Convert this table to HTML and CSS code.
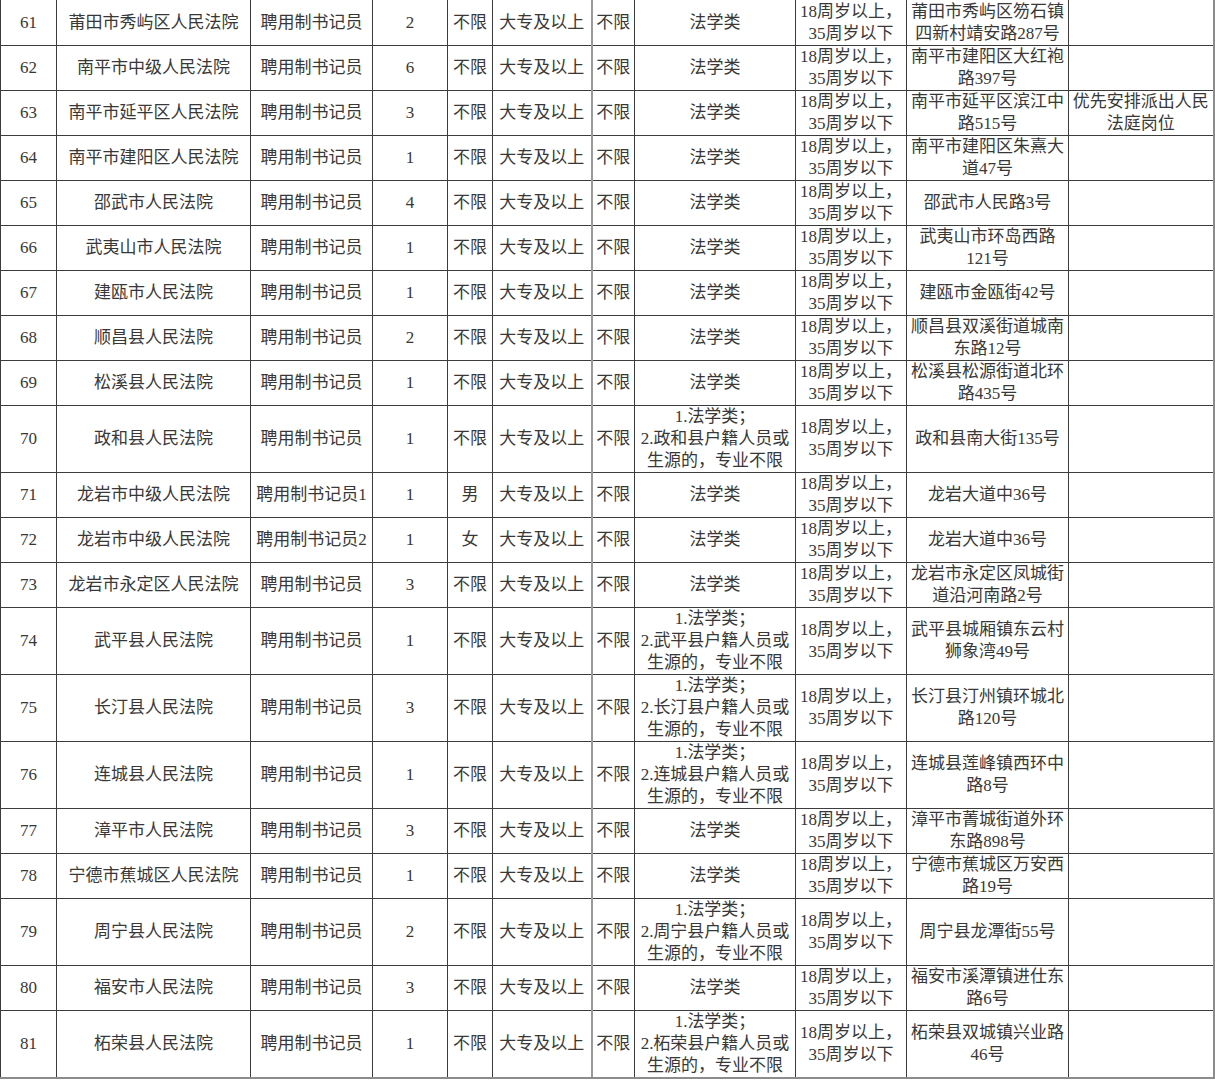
FILE: index.html
```html
<!DOCTYPE html>
<html lang="zh-CN">
<head>
<meta charset="utf-8">
<title>聘用制书记员岗位表</title>
<link rel="stylesheet" href="styles.css">
</head>
<body>
<table class="grid">
  <colgroup>
    <col class="c-no"><col class="c-unit"><col class="c-post"><col class="c-num"><col class="c-sex"><col class="c-edu"><col class="c-deg"><col class="c-major"><col class="c-age"><col class="c-addr"><col class="c-note">
  </colgroup>
  <tbody>
    <tr class="first"><td>61</td><td>莆田市秀屿区人民法院</td><td>聘用制书记员</td><td>2</td><td>不限</td><td>大专及以上</td><td class="split">不限</td><td>法学类</td><td>18周岁以上，<br>35周岁以下</td><td>莆田市秀屿区笏石镇<br>四新村靖安路287号</td><td></td></tr>
    <tr><td>62</td><td>南平市中级人民法院</td><td>聘用制书记员</td><td>6</td><td>不限</td><td>大专及以上</td><td class="split">不限</td><td>法学类</td><td>18周岁以上，<br>35周岁以下</td><td>南平市建阳区大红袍<br>路397号</td><td></td></tr>
    <tr><td>63</td><td>南平市延平区人民法院</td><td>聘用制书记员</td><td>3</td><td>不限</td><td>大专及以上</td><td class="split">不限</td><td>法学类</td><td>18周岁以上，<br>35周岁以下</td><td>南平市延平区滨江中<br>路515号</td><td>优先安排派出人民<br>法庭岗位</td></tr>
    <tr><td>64</td><td>南平市建阳区人民法院</td><td>聘用制书记员</td><td>1</td><td>不限</td><td>大专及以上</td><td class="split">不限</td><td>法学类</td><td>18周岁以上，<br>35周岁以下</td><td>南平市建阳区朱熹大<br>道47号</td><td></td></tr>
    <tr><td>65</td><td>邵武市人民法院</td><td>聘用制书记员</td><td>4</td><td>不限</td><td>大专及以上</td><td class="split">不限</td><td>法学类</td><td>18周岁以上，<br>35周岁以下</td><td>邵武市人民路3号</td><td></td></tr>
    <tr><td>66</td><td>武夷山市人民法院</td><td>聘用制书记员</td><td>1</td><td>不限</td><td>大专及以上</td><td class="split">不限</td><td>法学类</td><td>18周岁以上，<br>35周岁以下</td><td>武夷山市环岛西路<br>121号</td><td></td></tr>
    <tr><td>67</td><td>建瓯市人民法院</td><td>聘用制书记员</td><td>1</td><td>不限</td><td>大专及以上</td><td class="split">不限</td><td>法学类</td><td>18周岁以上，<br>35周岁以下</td><td>建瓯市金瓯街42号</td><td></td></tr>
    <tr><td>68</td><td>顺昌县人民法院</td><td>聘用制书记员</td><td>2</td><td>不限</td><td>大专及以上</td><td class="split">不限</td><td>法学类</td><td>18周岁以上，<br>35周岁以下</td><td>顺昌县双溪街道城南<br>东路12号</td><td></td></tr>
    <tr><td>69</td><td>松溪县人民法院</td><td>聘用制书记员</td><td>1</td><td>不限</td><td>大专及以上</td><td class="split">不限</td><td>法学类</td><td>18周岁以上，<br>35周岁以下</td><td>松溪县松源街道北环<br>路435号</td><td></td></tr>
    <tr><td>70</td><td>政和县人民法院</td><td>聘用制书记员</td><td>1</td><td>不限</td><td>大专及以上</td><td class="split">不限</td><td>1.法学类；<br>2.政和县户籍人员或<br>生源的，专业不限</td><td>18周岁以上，<br>35周岁以下</td><td>政和县南大街135号</td><td></td></tr>
    <tr><td>71</td><td>龙岩市中级人民法院</td><td>聘用制书记员1</td><td>1</td><td>男</td><td>大专及以上</td><td class="split">不限</td><td>法学类</td><td>18周岁以上，<br>35周岁以下</td><td>龙岩大道中36号</td><td></td></tr>
    <tr><td>72</td><td>龙岩市中级人民法院</td><td>聘用制书记员2</td><td>1</td><td>女</td><td>大专及以上</td><td class="split">不限</td><td>法学类</td><td>18周岁以上，<br>35周岁以下</td><td>龙岩大道中36号</td><td></td></tr>
    <tr><td>73</td><td>龙岩市永定区人民法院</td><td>聘用制书记员</td><td>3</td><td>不限</td><td>大专及以上</td><td class="split">不限</td><td>法学类</td><td>18周岁以上，<br>35周岁以下</td><td>龙岩市永定区凤城街<br>道沿河南路2号</td><td></td></tr>
    <tr><td>74</td><td>武平县人民法院</td><td>聘用制书记员</td><td>1</td><td>不限</td><td>大专及以上</td><td class="split">不限</td><td>1.法学类；<br>2.武平县户籍人员或<br>生源的，专业不限</td><td>18周岁以上，<br>35周岁以下</td><td>武平县城厢镇东云村<br>狮象湾49号</td><td></td></tr>
    <tr><td>75</td><td>长汀县人民法院</td><td>聘用制书记员</td><td>3</td><td>不限</td><td>大专及以上</td><td class="split">不限</td><td>1.法学类；<br>2.长汀县户籍人员或<br>生源的，专业不限</td><td>18周岁以上，<br>35周岁以下</td><td>长汀县汀州镇环城北<br>路120号</td><td></td></tr>
    <tr><td>76</td><td>连城县人民法院</td><td>聘用制书记员</td><td>1</td><td>不限</td><td>大专及以上</td><td class="split">不限</td><td>1.法学类；<br>2.连城县户籍人员或<br>生源的，专业不限</td><td>18周岁以上，<br>35周岁以下</td><td>连城县莲峰镇西环中<br>路8号</td><td></td></tr>
    <tr><td>77</td><td>漳平市人民法院</td><td>聘用制书记员</td><td>3</td><td>不限</td><td>大专及以上</td><td class="split">不限</td><td>法学类</td><td>18周岁以上，<br>35周岁以下</td><td>漳平市菁城街道外环<br>东路898号</td><td></td></tr>
    <tr><td>78</td><td>宁德市蕉城区人民法院</td><td>聘用制书记员</td><td>1</td><td>不限</td><td>大专及以上</td><td class="split">不限</td><td>法学类</td><td>18周岁以上，<br>35周岁以下</td><td>宁德市蕉城区万安西<br>路19号</td><td></td></tr>
    <tr><td>79</td><td>周宁县人民法院</td><td>聘用制书记员</td><td>2</td><td>不限</td><td>大专及以上</td><td class="split">不限</td><td>1.法学类；<br>2.周宁县户籍人员或<br>生源的，专业不限</td><td>18周岁以上，<br>35周岁以下</td><td>周宁县龙潭街55号</td><td></td></tr>
    <tr><td>80</td><td>福安市人民法院</td><td>聘用制书记员</td><td>3</td><td>不限</td><td>大专及以上</td><td class="split">不限</td><td>法学类</td><td>18周岁以上，<br>35周岁以下</td><td>福安市溪潭镇进仕东<br>路6号</td><td></td></tr>
    <tr class="last"><td>81</td><td>柘荣县人民法院</td><td>聘用制书记员</td><td>1</td><td>不限</td><td>大专及以上</td><td class="split">不限</td><td>1.法学类；<br>2.柘荣县户籍人员或<br>生源的，专业不限</td><td>18周岁以上，<br>35周岁以下</td><td>柘荣县双城镇兴业路<br>46号</td><td></td></tr>
  </tbody>
</table>
</body>
</html>
```

FILE: styles.css
```css
html, body {
  margin: 0;
  padding: 0;
  background: #ffffff;
}

.grid {
  border-collapse: collapse;
  table-layout: fixed;
  width: 1214px;
  font-family: "Liberation Serif", "Noto Sans CJK SC", serif;
  font-size: 17px;
  line-height: 22px;
  color: #383838;
}

.c-no { width: 56px; }
.c-unit { width: 194px; }
.c-post { width: 122px; }
.c-num { width: 75px; }
.c-sex { width: 45px; }
.c-edu { width: 99px; }
.c-deg { width: 43px; }
.c-major { width: 161px; }
.c-age { width: 111px; }
.c-addr { width: 162px; }
.c-note { width: 145px; }

.grid td {
  border: 1px solid #3c3c3c;
  padding: 0;
  text-align: center;
  vertical-align: middle;
  height: 44px;
  white-space: nowrap;
  overflow: hidden;
}

.grid tr.first td {
  border-top: none;
  height: 45px;
}

.grid td.split {
  border-left: 2px solid #9a9a9a;
}

.grid td:last-child {
  border-right: 2px solid #8c8c8c;
}

.grid tr.last td {
  border-bottom: 2px solid #8c8c8c;
}
```
